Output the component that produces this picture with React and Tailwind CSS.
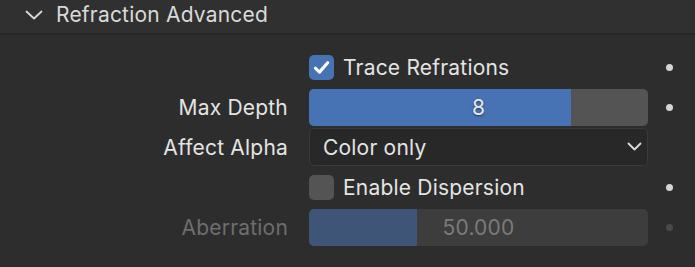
import React from "react";

function Dot({ dim }) {
    return (
        <div className="flex w-[42px] shrink-0 justify-center">
            <span className={`block h-[7px] w-[7px] rounded-full ${dim ? "bg-[#4a4a4a]" : "bg-[#d4d4d4]"}`} />
        </div>
    );
}

function Row({ label, dim, children, dot = true, dotDim }) {
    return (
        <div className="flex h-10 items-center">
            <div className={`w-[288px] shrink-0 pr-0 text-right ${dim ? "text-[#6e6e6e]" : "text-[#e4e4e4]"}`}>
                {label}
            </div>
            <div className="ml-[21px] w-[339px] shrink-0">{children}</div>
            {dot ? <Dot dim={dotDim} /> : null}
        </div>
    );
}

function Slider({ value, fraction, dim }) {
    return (
        <div
            className={`relative flex h-[37px] items-center justify-center overflow-hidden rounded-[5px] ${
                dim ? "bg-[#3d3d3d]" : "bg-[#545454]"
            }`}
        >
            <div
                className={`absolute inset-y-0 left-0 ${dim ? "bg-[#3f5577]" : "bg-[#4772b3]"}`}
                style={{ width: `${fraction * 100}%` }}
            />
            <span
                className={`relative ${dim ? "text-[#7a7a7a]" : "text-[#e8e8e8] [text-shadow:0_1px_2px_rgba(0,0,0,0.5)]"}`}
            >
                {value}
            </span>
        </div>
    );
}

function Checkbox({ checked, label }) {
    return (
        <div className="flex items-center gap-[9px]">
            <div
                className={`flex h-[25px] w-[25px] items-center justify-center rounded-[5px] ${
                    checked ? "bg-[#4772b3]" : "bg-[#545454]"
                }`}
            >
                {checked ? (
                    <svg width="19" height="19" viewBox="0 0 16 16" fill="none">
                        <path d="M2.8 8.6 L6.3 11.9 L13.2 4" stroke="#ffffff" strokeWidth="2.6" strokeLinecap="round" strokeLinejoin="round" />
                    </svg>
                ) : null}
            </div>
            <span className="text-[#e4e4e4]">{label}</span>
        </div>
    );
}

export default function App() {
    return (
        <div className="h-[267px] w-[695px] overflow-hidden bg-[#2d2d2d] text-[21px] tracking-[0.2px] leading-none font-['Inter',sans-serif]">
            <div className="flex h-[35px] items-center border-b-2 border-[#262626] bg-[#303030] pb-[4px]">
                <svg className="ml-[25px]" width="18" height="10" viewBox="0 0 18 10" fill="none">
                    <path d="M1.5 1.5 L9 8.5 L16.5 1.5" stroke="#d8d8d8" strokeWidth="1.8" strokeLinecap="round" strokeLinejoin="round" />
                </svg>
                <span className="ml-[13px] text-[#dadada]">Refraction Advanced</span>
            </div>
            <div className="pt-[12px]">
                <Row label="">
                    <Checkbox checked label="Trace Refrations" />
                </Row>
                <Row label="Max Depth">
                    <Slider value="8" fraction={0.773} />
                </Row>
                <Row label="Affect Alpha" dot={false}>
                    <div className="flex h-[38px] items-center justify-between rounded-[5px] border border-[#3a3a3a] bg-[#282828] pl-[13px] pr-[5px]">
                        <span className="text-[#e4e4e4]">Color only</span>
                        <svg width="15" height="10" viewBox="0 0 15 10" fill="none">
                            <path d="M1.5 1.5 L7.5 7.5 L13.5 1.5" stroke="#dcdcdc" strokeWidth="1.8" strokeLinecap="round" strokeLinejoin="round" />
                        </svg>
                    </div>
                </Row>
                <Row label="">
                    <Checkbox label="Enable Dispersion" />
                </Row>
                <Row label="Aberration" dim dotDim>
                    <Slider value="50.000" fraction={0.32} dim />
                </Row>
            </div>
        </div>
    );
}
